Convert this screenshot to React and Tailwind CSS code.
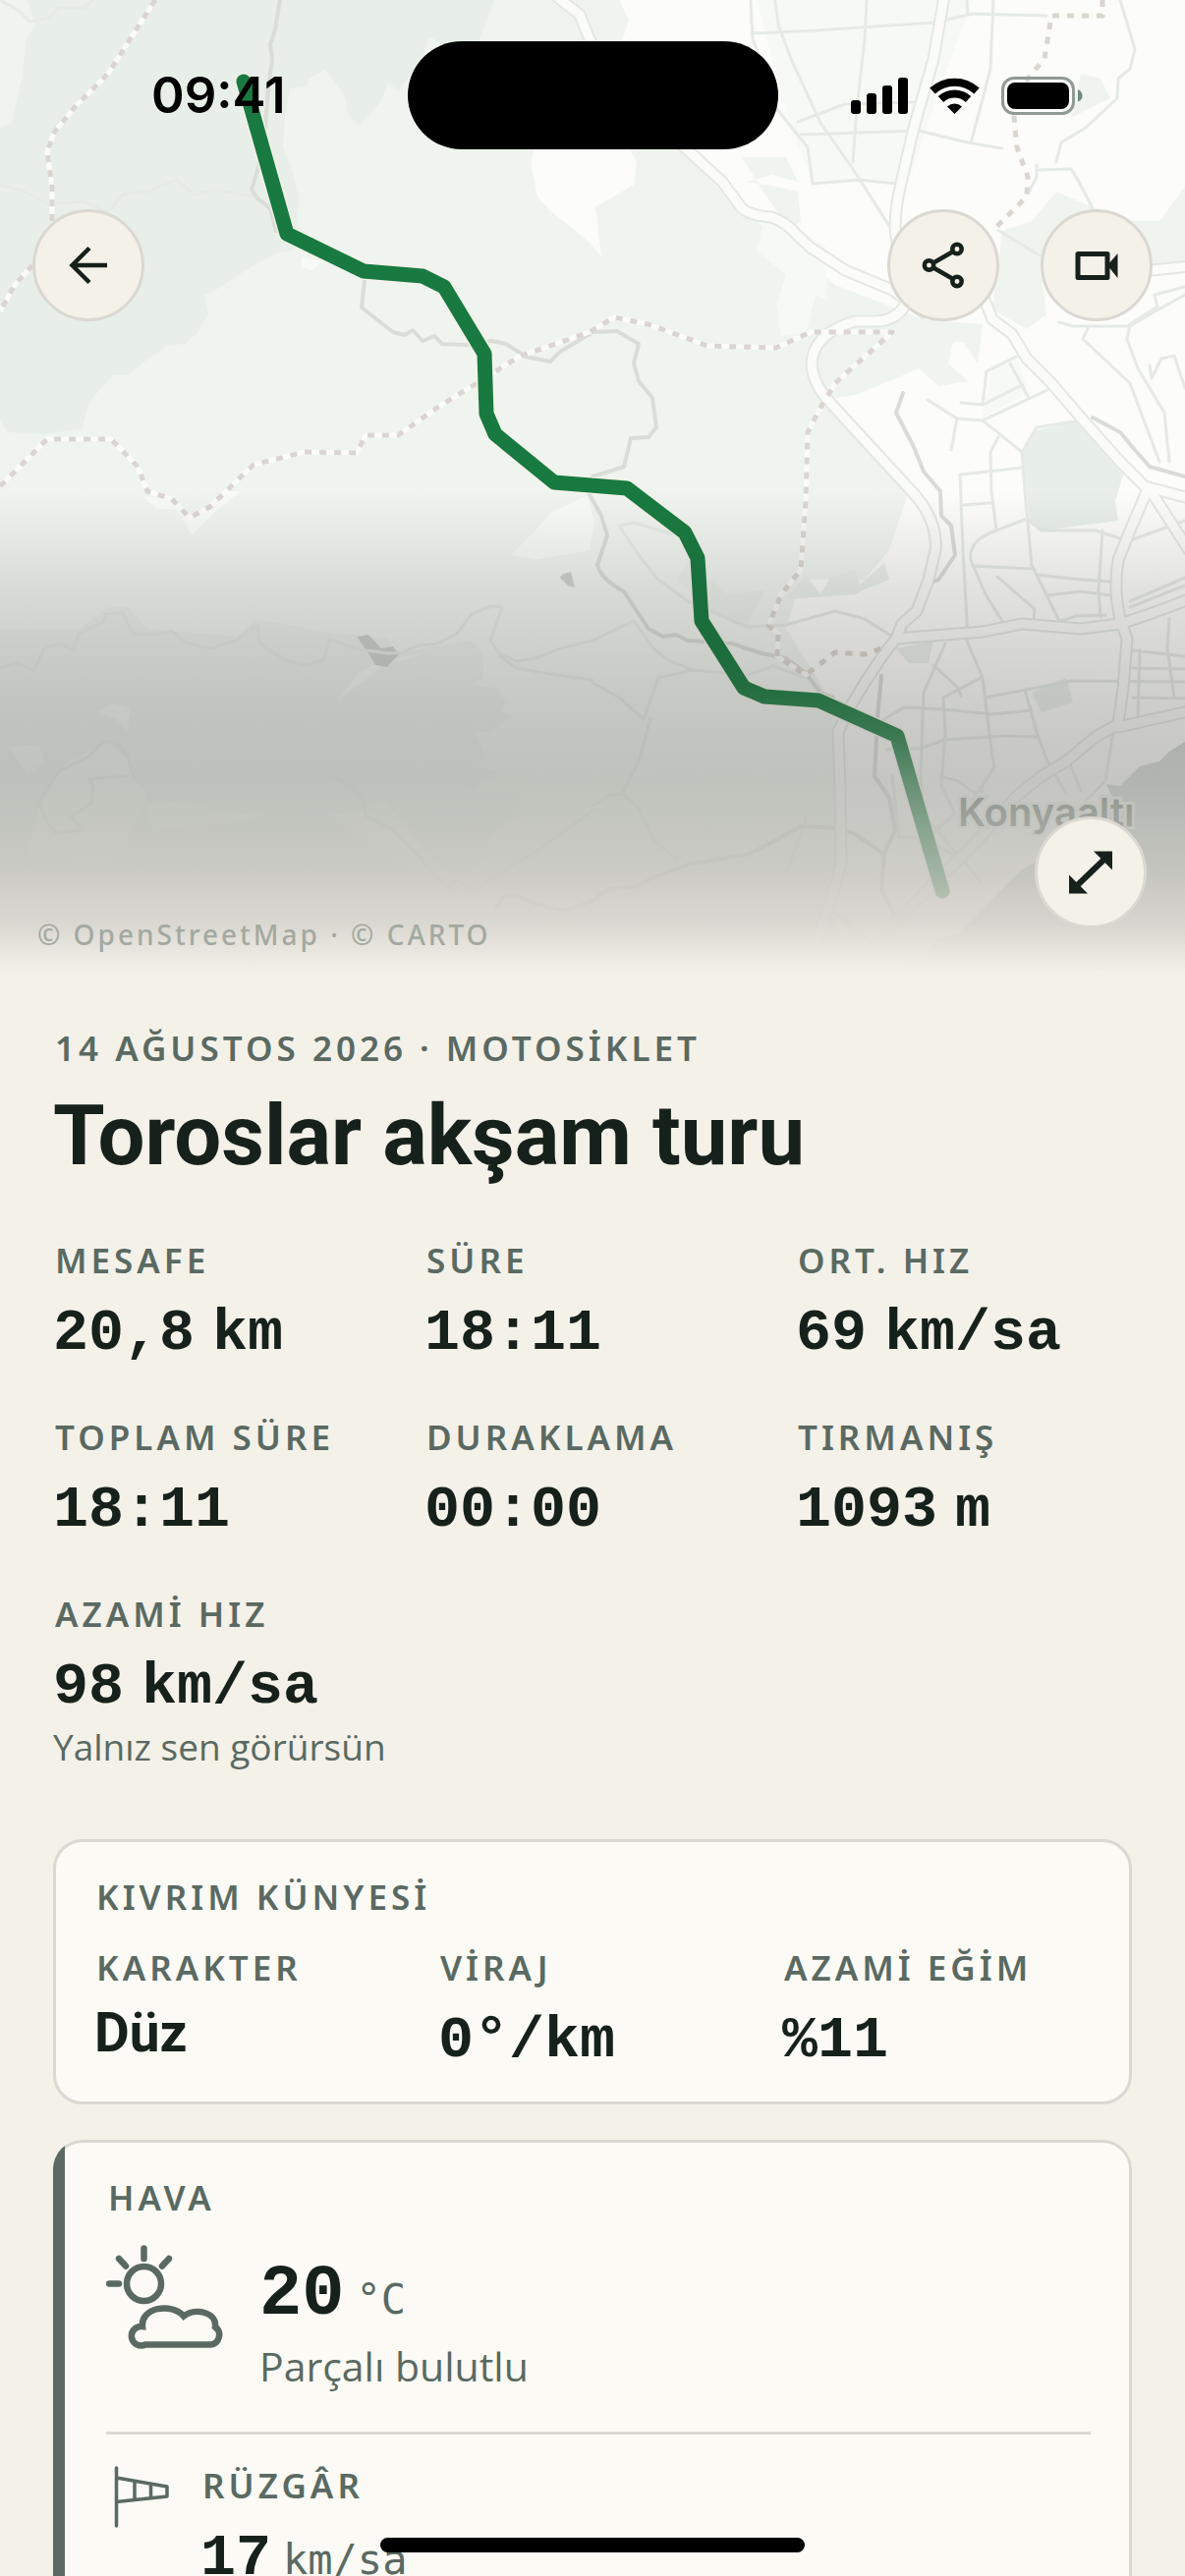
const STATS = [
  { label: 'MESAFE', value: '20,8\u202fkm' },
  { label: 'SÜRE', value: '18:11' },
  { label: 'ORT. HIZ', value: '69\u202fkm/sa' },
  { label: 'TOPLAM SÜRE', value: '18:11' },
  { label: 'DURAKLAMA', value: '00:00' },
  { label: 'TIRMANIŞ', value: '1093\u202fm' },
  { label: 'AZAMİ HIZ', value: '98\u202fkm/sa', note: 'Yalnız sen görürsün' },
]

const ROUTE =
  '248,83 292,238 370,276 430,281 452,292 493,360 495,421 504,442 564,491 638,497 697,542 710,568 714,632 757,700 778,709 833,713 913,749 959,907'

// wide roads, drawn twice: casing first, then the light fill
const MAIN_ROADS = [
  'M566 -4 590 15 600 40 640 100 699 152 735 185 755 212 Q765 220 785 221 Q800 226 812 240 L825 252 860 275 908 295 940 318',
  'M961 -4 950 60 930 130 915 195 Q908 230 914 250 L925 300 Q918 327 890 327 L870 327 Q826 340 826 372 Q828 392 845 410 L925 497 Q955 528 952 560 L945 590 933 622 918 635 912 650 900 665 880 695 862 725 853 745 855 800 856 880 845 920 820 990',
  'M1000 300 1010 325 1030 340 1045 365 1070 390 1100 425 1140 470 1165 495 1210 507',
  'M1168 498 1150 540 1138 570 Q1133 600 1140 630 L1147 650 1143 700 1138 737 1115 750 1085 775 1060 790 1035 810 1000 850 960 890 920 930 866 992',
  'M912 650 1000 643 1040 635 1100 640 1140 635 1170 625 1210 610',
  'M1170 498 1210 560',
  'M1138 740 1210 724',
  'M1172 275 1210 271',
]

const MINOR_ROADS = [
  'M764 0 766 40 780 75 790 110 810 135 822 150 827 187 875 183 912 187',
  'M789 0 792 25 805 60 835 125 870 175 905 230',
  'M765 34 830 31 950 23 990 14 1065 16',
  'M882 0 880 40 872 110 868 165',
  'M812 124 860 106 930 104',
  'M815 137 935 133 980 144 1020 151',
  'M1011 0 1008 70 988 146',
  'M984 0 985 14',
  'M1140 0 1155 50 1150 70 1138 80 1137 100 1105 130 1080 145 1075 165',
  'M1055 173 1090 172 1098 185 1112 212',
  'M1055 168 1055 180 1045 200',
  'M1012 232 1058 260',
  'M1078 328 1092 332 1150 332 1170 320 1206 300',
  'M1107 334 1102 345 1150 390 1180 470',
  'M1206 292 1175 300 1178 312 1150 330 1147 345 1158 375 1185 420 1190 470',
  'M1170 372 1172 385 1182 365 1195 362 1206 395',
  'M1000 412 1004 378 1034 363',
  'M1028 370 1047 405',
  'M978 410 1000 412 1040 392',
  'M944 407 974 426 1000 428 1068 396',
  'M974 426 968 458',
  'M1000 428 1040 460 1055 435 1100 428',
  'M1040 460 1043 500 1050 575 1078 632',
  'M1016 445 1008 460 1009 500 1014 540',
  'M978 483 1040 476',
  'M977 483 980 560 985 650',
  'M980 514 1008 512',
  'M1014 540 1045 528 1060 540 1115 540 1140 548',
  'M1014 540 Q985 550 988 570 L1003 605 1020 632',
  'M990 576 1050 579',
  'M1015 587 1053 620 1052 632',
  'M1055 585 1100 590 1130 592',
  'M1066 606 1100 602 1130 606',
  'M1122 540 1118 600 1120 628',
  'M1080 632 1095 627 1125 626',
  'M1150 550 1206 530',
  'M1150 612 1206 588',
  'M1150 618 1206 596',
  'M1153 662 1206 668',
  'M1160 662 1158 732',
  'M1190 630 1188 660 1195 710',
  'M1153 680 1206 681',
  'M1153 710 1206 711',
  'M983 650 1000 690 1010 770 1012 780 1000 800 988 815',
  'M962 655 940 705 937 790 940 850',
  'M950 677 975 700 978 708',
  'M900 732 920 720 960 722 1010 727 1050 723',
  'M1003 710 1045 702 1090 693 1206 694',
  'M1043 702 1055 745 1066 775 1085 808',
  'M998 690 960 710 962 745 958 800 972 828 950 848',
  'M903 763 935 762 962 753 1020 749 1055 750',
  'M957 790 975 795 990 806 1000 806',
  'M1088 775 1100 805',
  'M1133 745 1125 795 1105 815',
  'M908 790 915 852 940 853 980 875 998 898',
  'M940 830 975 870',
  'M630 535 645 532 690 545 700 560',
  'M630 535 650 565 670 590 700 612 730 625 760 638 800 636 850 622 880 630 908 648',
  'M603 652 645 632 665 660 680 672 705 682 760 687 787 678 820 690',
  'M603 695 630 710 655 732 670 690 705 682',
  'M662 732 650 775 633 808 650 822 665 855 690 875',
  'M603 820 620 810 633 808',
  'M0 680 15 675 35 682 45 660 62 655 75 662 80 645 105 633 108 625 125 624 135 645 165 645 175 642 190 655 215 660 240 652 262 636 265 655 290 672 310 677 330 672 335 650 360 660 395 665',
  'M395 665 410 664 425 657 445 655 465 645 480 625 500 617 511 618 499 652 508 665 525 673 545 670 570 660 603 652',
  'M508 667 525 680 560 686 603 692',
  'M40 817 60 785 90 770 105 755 118 755 130 770 136 792',
  'M40 817 50 840 57 848 85 845 72 831 93 818 95 800 90 793 130 790',
  'M340 790 360 803 370 815 372 830 400 845 425 870 440 888 457 905 465 895 480 908 555 860 603 825',
  'M845 925 880 955 890 965',
  'M820 835 800 890',
  'M0 188 25 195 50 208 85 205 110 216 125 198 150 195 180 183 198 198 220 193 255 200',
  'M0 0 18 10 30 22 50 18 60 8 85 8 95 0',
]

const STREAMS = [
  'M285 0 280 30 275 45 277 60 273 90 270 130 263 170 256 193 262 202 275 212 281 235',
  'M371 285 368 313 400 338 412 341 420 336 430 347 442 342 450 350 475 351 500 347 515 350 535 363 560 368 570 358 600 340 603 338 628 337 650 350 645 370 650 388 664 405 668 435 660 445 642 446 635 475 603 485 598 500 612 525 618 545 608 575 Q612 590 635 602 L650 625 660 640 675 648 688 646 700 652 745 655 775 665 800 670 820 685 835 705 848 710',
  'M919 400 912 420 930 455 940 480 957 500 958 525 968 535 972 565 955 590 948 593',
  'M897 688 893 730 890 790 905 812 911 845 900 868 897 905 910 930',
  'M603 917 620 905 645 903 665 893 700 880 760 870 790 855 815 841 850 843 868 848 898 868',
  'M505 925 512 913 525 912 545 920 575 927 603 917',
  'M1112 425 1140 440 1155 458 1170 475 1206 485',
]

const BORDERS = [
  'M158 0 110 75 75 110 55 135 48 155 53 190 53 225',
  'M33 270 15 290 0 317',
  'M0 495 48 447 113 447 140 475 150 500 175 508 193 527 215 515 230 500 258 473 310 460 363 461 372 443 405 443 445 415 530 362 560 352 600 338 625 323 660 330 720 352 790 354 825 338 908 338 850 390 835 415 822 440 820 510 815 580 795 605 782 637 792 645 791 668 820 687 850 664 880 666 897 660',
  'M1122 0 1122 16 1070 16 1063 60 1050 75 1038 90 1032 118 1035 150 1046 180 1045 200 1010 235',
]

const label =
  'pl-0.5 font-["Noto_Sans",sans-serif] text-[35px] leading-[48px] font-semibold tracking-[4px] text-[#5a6a62]'
const value = 'font-["Liberation_Mono",monospace] text-[60px] leading-[72px] font-bold text-[#17211c]'
const unit = 'ml-3 font-["DejaVu_Sans_Mono",monospace] text-[42px] leading-none font-normal text-[#5a6a62]'
const roundButton =
  'flex size-[114px] items-center justify-center rounded-full border-[3px] border-[#dad8d1] bg-[#f4f1e9] text-[#17211c]'

function MapView() {
  return (
    <svg className="absolute inset-0 size-full" viewBox="0 0 1206 990" preserveAspectRatio="xMidYMin slice">
      <rect width="1206" height="990" fill="#fcfcfa" />
      {/* woodland */}
      <path
        d="M0 0H630L640 20 632 45 600 60 545 150 540 165 547 200 560 215 590 238 603 250 612 262 606 210 625 200 645 188 648 165 640 150H690L740 200 770 225 800 250 850 290 940 325 1000 330 995 370 980 348 970 348 965 370 985 388 955 393 935 375 905 388 870 402 850 405 926 497 905 560 880 590 815 590 800 640 850 720 850 990H0Z"
        fill="#f0f4ef"
      />
      <path d="M755 160 800 160 812 185 785 178 760 185 790 190 812 195 815 225 805 235 780 200ZM1020 235 1050 225 1075 195 1110 210 1150 225 1180 225 1206 190V270L1060 280 1065 320 1045 335 1010 315ZM1100 75 1120 80 1130 100 1090 120Z" fill="#f0f4ef" />
      <path
        d="M0 0H503L495 22 488 40 483 58 465 60 450 45 437 37 428 65 405 92 395 84 387 105 365 127 355 118 350 95 330 71 315 80 312 88 295 90 290 120 288 150 298 175 304 200 302 240 300 254 280 258 262 268 235 285 220 295 208 300 212 320 200 340 188 350 170 352 155 362 130 382 115 382 90 410 84 436 45 442 8 440 0 428Z"
        fill="#e8efe8"
      />
      <path d="M0 0H28L36 25 27 40 22 80 12 125 0 130Z" fill="#f0f4ef" />
      <path
        d="M0 640 80 640 110 618 130 618 150 640 240 648 262 630 340 645 395 650 400 665 480 652 492 665 492 690 480 697 505 700 515 715 510 725 523 728 500 745 482 745 495 770 485 780 510 787 475 805 530 808 528 830 505 845 495 870 480 890H0Z"
        fill="#ebf0eb"
      />
      <path d="M45 805 70 775 110 755 130 775 137 795 150 808 135 845 110 875 70 873 28 870 35 840ZM10 760 40 758 45 775 28 790ZM100 725 115 716 132 722 130 745 118 732ZM150 820 180 815 230 827 270 830 255 835 210 840 155 845ZM335 830 375 825 390 815 420 850 460 895 430 890 380 860ZM343 713 365 685 385 675 440 662 420 668 390 678Z" fill="#f2f5f1" />
      {/* clearings */}
      <path d="M597 505 605 530 600 560 545 570 520 565 545 540 560 522ZM145 505 160 518 180 518 195 545 220 520 245 500 232 500 215 515 193 527 175 508ZM307 262 328 266 318 275 307 272Z" fill="#f8faf6" />
      {/* built-up areas and parks */}
      <path d="M770 0H990L960 80 925 185 827 187 805 130ZM1010 375 1034 363 1047 400 1000 425ZM780 215 805 230 840 250 842 305 830 300 820 340 795 342 790 310 800 280 770 255Z" fill="#f7f9f5" />
      <path d="M1040 460 1055 438 1108 426 1145 478 1135 510 1138 530 1060 540 1048 530Z" fill="#e8efe8" />
      <path d="M700 570 690 590 720 620 760 635 780 600 740 605ZM820 585 835 605 845 588 870 580 875 595 900 573 905 590 880 600 870 605 800 610ZM912 660 950 652 945 675 925 675ZM1050 705 1085 690 1092 715 1060 725Z" fill="#ebf0eb" />
      <path d="M363 648 375 646 388 660 400 658 406 666 394 679 382 677 375 665ZM573 584 581 582 585 598 578 596 570 588Z" fill="#cdd3cf" />
      {/* sea */}
      <path d="M1206 755 1190 765 1180 775 1160 780 1140 800 1126 798 1132 812 1110 845 1060 875 1040 885 1010 915 975 950 955 955 935 975 908 990H1206Z" fill="#ced3d0" />
      <g fill="none" strokeLinecap="round" strokeLinejoin="round">
        {MINOR_ROADS.map((d) => (
          <path key={d} d={d} stroke="#e6eae6" strokeWidth="3" />
        ))}
        {STREAMS.map((d) => (
          <path key={d} d={d} stroke="#dadcd7" strokeWidth="4" />
        ))}
        {MAIN_ROADS.map((d) => (
          <path key={d} d={d} stroke="#e3e8e3" strokeWidth="13" />
        ))}
        {MAIN_ROADS.map((d) => (
          <path key={d} d={d} stroke="#fbfbf9" strokeWidth="9" />
        ))}
      </g>
      <g fill="none" strokeLinejoin="round" strokeWidth="5">
        {BORDERS.map((d) => (
          <path key={d} d={d} stroke="#fbfbf8" />
        ))}
        {BORDERS.map((d) => (
          <path key={d} d={d} stroke="#dad6cf" strokeDasharray="7 8" />
        ))}
      </g>
      <g fill="none" strokeLinecap="round" strokeLinejoin="round">
        <polyline points={ROUTE} stroke="#f4f1e9" strokeWidth="18" />
        <polyline points={ROUTE} stroke="#187a40" strokeWidth="15" />
      </g>
      <text
        x="975"
        y="841"
        fill="#74817a"
        stroke="#eef0ec"
        strokeWidth="6"
        paintOrder="stroke"
        className='font-["Inter",sans-serif] text-[40px] font-semibold'
      >
        Konyaaltı
      </text>
    </svg>
  )
}

function StatusIcons() {
  return (
    <svg className="h-[40px] w-[236px]" viewBox="865 77 236 40">
      <rect x="865" y="102" width="10" height="14" rx="3" />
      <rect x="881" y="95" width="10" height="21" rx="3" />
      <rect x="897" y="87" width="10" height="29" rx="3" />
      <rect x="913" y="79" width="10" height="37" rx="3" />
      {/* wifi */}
      <g fill="none" stroke="#000" strokeWidth="8">
        <path d="M948 92.500A33 33 0 0 1 993 92.500" />
        <path d="M956.500 101A20.500 20.500 0 0 1 984.500 101" />
      </g>
      <path d="M970.500 116 963 108.500A11 11 0 0 1 978 108.500Z" />
      {/* battery */}
      <rect x="1019.500" y="79.500" width="72" height="36" rx="11.500" fill="none" stroke="#8f9b94" strokeWidth="3" />
      <rect x="1024" y="84" width="63" height="27" rx="8" />
      <path d="M1096 91Q1100.500 93 1100.500 97.500T1096 103.500Z" fill="#6e8b7d" />
    </svg>
  )
}

function Stat({ item }) {
  return (
    <div>
      <dt className={label}>{item.label}</dt>
      <dd className={`mt-3.5 whitespace-nowrap ${value}`}>{item.value}</dd>
      {item.note && (
        <dd className='font-["Open_Sans",sans-serif] text-[37px] leading-[50px] text-[#5a6a62]'>{item.note}</dd>
      )}
    </div>
  )
}

export default function App() {
  return (
    <div className="h-screen overflow-hidden bg-[#f4f1e9]">
      {/* Map hero */}
      <header className="relative flex h-[990px] flex-col">
        <MapView />
        <div className="absolute inset-x-0 bottom-0 h-[490px] bg-[linear-gradient(to_bottom,rgba(40,40,36,0)_0%,rgba(40,40,36,0.06)_10%,rgba(40,40,36,0.12)_20%,rgba(46,45,40,0.17)_30%,rgba(66,66,60,0.23)_40%,rgba(112,114,108,0.36)_50%,rgba(156,157,150,0.57)_60%,rgba(180,181,174,0.72)_70%,rgba(196,195,188,0.82)_80%,rgba(216,213,206,0.9)_90%,rgba(244,241,233,1)_100%)]" />

        {/* Status bar */}
        <div className="relative mt-[42px] grid h-[110px] grid-cols-[1fr_377px_1fr] items-center">
          <div className='pl-[30px] text-center font-["Inter",sans-serif] text-[51px] leading-[60px] font-semibold text-black'>09:41</div>
          <div className="h-full rounded-full bg-black" />
          <div className="flex justify-center pr-[30px]">
            <StatusIcons />
          </div>
        </div>

        {/* Nav */}
        <nav className="relative mt-[61px] flex justify-between px-[33px]">
          <button type="button" aria-label="Geri" className={roundButton}>
            <svg className="size-[48px]" viewBox="0 0 48 48" fill="none" stroke="currentColor" strokeWidth="4.500">
              <path d="M43 24H8M25 6.500 7.500 24 25 41.500" />
            </svg>
          </button>
          <div className="flex gap-[42px]">
            <button type="button" aria-label="Paylaş" className={roundButton}>
              <svg className="size-[48px]" viewBox="0 0 48 48" fill="none" stroke="currentColor" strokeWidth="4.500">
                <circle cx="9.500" cy="24" r="4.700" />
                <circle cx="38" cy="7.500" r="4.700" />
                <circle cx="38" cy="40.500" r="4.700" />
                <path d="M14 21.500 34 10M14 26.500 34 38" />
              </svg>
            </button>
            <button type="button" aria-label="Video" className={roundButton}>
              <svg className="size-[48px]" viewBox="0 0 48 48" fill="none" stroke="currentColor" strokeWidth="5">
                <path d="M5 12.500H35V36.500H5Z" strokeLinejoin="round" />
                <path d="M35 24 45.500 12V37Z" fill="currentColor" stroke="none" />
              </svg>
            </button>
          </div>
        </nav>

        <div className="relative mt-auto flex items-end justify-between pr-[39px] pb-[45px] pl-[38px]">
          <p className='-mb-[26px] font-["Noto_Sans",sans-serif] text-[28px] leading-[40px] font-medium tracking-[3px] text-[#a3a9a1]'>
            © OpenStreetMap · © CARTO
          </p>
          <button type="button" aria-label="Haritayı büyüt" className={roundButton}>
            <svg className="size-[48px]" viewBox="0 0 48 48" fill="currentColor">
              <path d="M27 2.500H46V21.500ZM2 26.500V45.500H21Z" />
              <path d="M37 11.500 11 36.500" stroke="currentColor" strokeWidth="6" />
            </svg>
          </button>
        </div>
      </header>

      <main className="px-[54px] pt-[53px]">
        <p className={label}>14 AĞUSTOS 2026 · MOTOSİKLET</p>
        <h1 className='mt-[15px] font-["Roboto",sans-serif] text-[85px] leading-[100px] font-bold text-[#17211c]'>Toroslar akşam turu</h1>

        <dl className="mt-[53px] grid grid-cols-3 gap-x-9 gap-y-[46px]">
          {STATS.map((item) => (
            <Stat key={item.label} item={item} />
          ))}
        </dl>

        {/* Bend profile */}
        <section className="mt-[69px] rounded-[30px] border-[3px] border-[#dad8d1] bg-[#fbfaf5] px-[39px] pt-8 pb-[26px]">
          <h2 className={label}>KIVRIM KÜNYESİ</h2>
          <dl className="mt-6 grid grid-cols-3 gap-x-9">
            <div>
              <dt className={label}>KARAKTER</dt>
              <dd className='mt-3.5 font-["Roboto",sans-serif] text-[55px] leading-[56px] font-bold text-[#17211c]'>Düz</dd>
            </div>
            <div>
              <dt className={label}>VİRAJ</dt>
              <dd className={`mt-3.5 ${value}`}>0°/km</dd>
            </div>
            <div>
              <dt className={`whitespace-nowrap ${label}`}>AZAMİ EĞİM</dt>
              <dd className={`mt-3.5 ${value}`}>%11</dd>
            </div>
          </dl>
        </section>

        {/* Weather */}
        <section className="relative mt-9 overflow-hidden rounded-[30px]">
          <div className="rounded-[30px] border-[3px] border-[#dad8d1] bg-[#fbfaf5] pt-8 pr-[39px] pb-12 pl-[51px]">
            <h2 className={label}>HAVA</h2>
            <div className="mt-[17px] flex items-start gap-9">
              <svg
                className="size-[120px] shrink-0 text-[#5a6a62]"
                viewBox="108 2278 120 120"
                fill="none"
                stroke="currentColor"
                strokeWidth="6.500"
                strokeLinecap="round"
              >
                <circle cx="146.500" cy="2324.500" r="17.500" />
                <path d="M146.500 2288.500V2299M111 2324.500H121M121 2299 128 2306.500M172 2299 165 2306.500" />
                <path
                  d="M148 2386.500A9.800 9.800 0 1 1 145 2368C143 2349 174 2343 187 2357.500C199 2348 221 2354 219 2368.500A10 10 0 0 1 214.500 2386.500Z"
                  strokeLinejoin="miter"
                />
              </svg>
              <div className="pt-[14px]">
                <p className='font-["Liberation_Mono",monospace] text-[72px] leading-[88px] font-bold text-[#17211c]'>
                  20<span className={unit}>°C</span>
                </p>
                <p className='font-["Open_Sans",sans-serif] text-[41px] leading-[56px] text-[#5a6a62]'>Parçalı bulutlu</p>
              </div>
            </div>
            <div className="mt-[39px] flex gap-6 border-t-[3px] border-[#dad8d1] pt-7">
              <svg className="size-[72px] shrink-0 text-[#5a6a62]" viewBox="0 0 72 72" fill="none" stroke="currentColor" strokeWidth="3.500" strokeLinecap="round" strokeLinejoin="round">
                <path d="M10.500 6V65M10.500 16 62 25V35L10.500 40.500M29 20V38M45.500 23V36" />
              </svg>
              <div>
                <h3 className={label}>RÜZGÂR</h3>
                <p className={`mt-3.5 ${value}`}>
                  17<span className={unit}>km/sa</span>
                </p>
              </div>
            </div>
          </div>
          <div className="absolute inset-y-0 left-0 w-3 bg-[#5a6a62]" />
        </section>
      </main>

      {/* Home indicator */}
      <div className="fixed bottom-6 left-1/2 h-[15px] w-[432px] -translate-x-1/2 rounded-full bg-black" />
    </div>
  )
}
